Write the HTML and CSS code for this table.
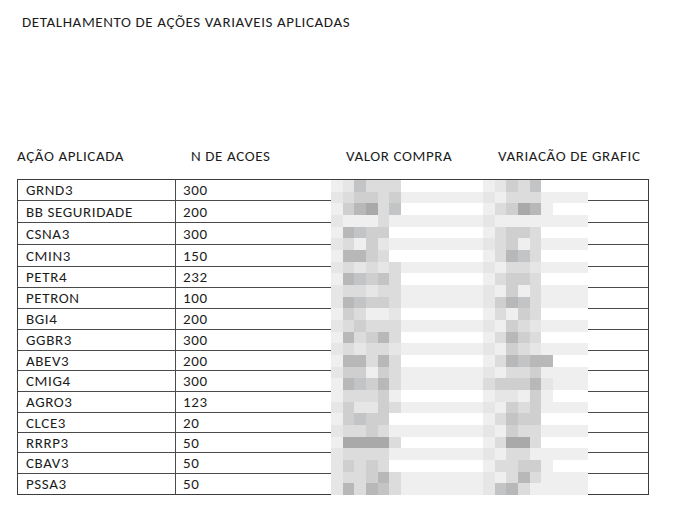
FILE: index.html
```html
<!DOCTYPE html>
<html lang="pt-BR">
<head>
<meta charset="utf-8">
<title>Detalhamento de ações variáveis aplicadas</title>
<link rel="stylesheet" href="styles.css">
</head>
<body>
<div class="page">
  <h1 class="title">DETALHAMENTO DE AÇÕES VARIAVEIS APLICADAS</h1>

  <div class="heads">
    <div class="h h1">AÇÃO APLICADA</div>
    <div class="h h2">N DE ACOES</div>
    <div class="h h3">VALOR COMPRA</div>
    <div class="h h4">VARIACÃO DE GRAFIC</div>
  </div>

  <div class="tbl">
    <div class="row r"><div class="c c1">GRND3</div><div class="c c2">300</div><div class="c c3"></div><div class="c c4"></div></div>
    <div class="row t"><div class="c c1">BB SEGURIDADE</div><div class="c c2">200</div><div class="c c3"></div><div class="c c4"></div></div>
    <div class="row t"><div class="c c1">CSNA3</div><div class="c c2">300</div><div class="c c3"></div><div class="c c4"></div></div>
    <div class="row t"><div class="c c1">CMIN3</div><div class="c c2">150</div><div class="c c3"></div><div class="c c4"></div></div>
    <div class="row r"><div class="c c1">PETR4</div><div class="c c2">232</div><div class="c c3"></div><div class="c c4"></div></div>
    <div class="row r"><div class="c c1">PETRON</div><div class="c c2">100</div><div class="c c3"></div><div class="c c4"></div></div>
    <div class="row r"><div class="c c1">BGI4</div><div class="c c2">200</div><div class="c c3"></div><div class="c c4"></div></div>
    <div class="row r"><div class="c c1">GGBR3</div><div class="c c2">300</div><div class="c c3"></div><div class="c c4"></div></div>
    <div class="row s"><div class="c c1">ABEV3</div><div class="c c2">200</div><div class="c c3"></div><div class="c c4"></div></div>
    <div class="row r"><div class="c c1">CMIG4</div><div class="c c2">300</div><div class="c c3"></div><div class="c c4"></div></div>
    <div class="row r"><div class="c c1">AGRO3</div><div class="c c2">123</div><div class="c c3"></div><div class="c c4"></div></div>
    <div class="row s"><div class="c c1">CLCE3</div><div class="c c2">20</div><div class="c c3"></div><div class="c c4"></div></div>
    <div class="row s"><div class="c c1">RRRP3</div><div class="c c2">50</div><div class="c c3"></div><div class="c c4"></div></div>
    <div class="row r"><div class="c c1">CBAV3</div><div class="c c2">50</div><div class="c c3"></div><div class="c c4"></div></div>
    <div class="row last"><div class="c c1">PSSA3</div><div class="c c2">50</div><div class="c c3"></div><div class="c c4"></div></div>

    <div class="mosaic" id="mosaic" aria-hidden="true"></div>
  </div>
</div>
<script src="mosaic.js"></script>
</body>
</html>
```

FILE: styles.css
```css
* { box-sizing: border-box; }

body {
  margin: 0;
  background: #ffffff;
  color: #1c1c1c;
  font-family: Carlito, Lato, "Open Sans", sans-serif;
}

.page {
  padding: 12px 0 0 17px;
}

.title {
  margin: 0 0 0 5px;
  font-size: 15px;
  letter-spacing: 0.6px;
  font-weight: normal;
  line-height: 20px;
}

.heads {
  display: grid;
  grid-template-columns: 158px 156px 154px 163px;
  margin-top: 114px;
  font-size: 15px;
  letter-spacing: 0.6px;
  line-height: 20px;
}

.h2 { padding-left: 16px; }
.h3 { padding-left: 15px; }
.h4 { padding-left: 13px; }

.tbl {
  position: relative;
  width: 632px;
  margin-top: 13px;
  border: 1px solid #3c3c3c;
  font-size: 15px;
  letter-spacing: 0.6px;
}

.row {
  display: grid;
  grid-template-columns: 158px 156px 154px 1fr;
  border-bottom: 1px solid #4a4a4a;
  height: 21px;
}
.row.t { height: 22px; }
.row.s { height: 20px; }
.row.last { border-bottom: 0; height: 20px; }

.c {
  display: flex;
  align-items: center;
  border-right: 1px solid #4a4a4a;
  white-space: nowrap;
}
.c4 { border-right: 0; }
.c1 { padding-left: 8px; }
.c2 { padding-left: 7px; }

.mosaic {
  position: absolute;
  top: 0;
  left: 313px;
  width: 257px;
  height: 315px;
  display: grid;
  grid-template-columns: repeat(22, 1fr);
  grid-template-rows: repeat(27, 1fr);
}

.s0 { background: #ffffff; }
.s1 { background: #efefef; }
.s2 { background: #e6e6e6; }
.s3 { background: #dcdcdc; }
.s4 { background: #cfcfd0; }
.s5 { background: #c3c4c6; }
.s6 { background: #b8b8b9; }
.s7 { background: #a9a9aa; }
```

FILE: mosaic.js
```js
(function () {
  var rows = [
    "125333" + "0000000" + "124350" + "000",
    "234434" + "1111111" + "213331" + "111",
    "146735" + "0000000" + "134761" + "000",
    "211131" + "1111111" + "211111" + "111",
    "165440" + "0000000" + "134430" + "000",
    "231421" + "1111111" + "234131" + "111",
    "166430" + "0000000" + "136530" + "000",
    "232323" + "1111111" + "213321" + "111",
    "165453" + "0000000" + "134430" + "000",
    "233233" + "1111111" + "214131" + "111",
    "265443" + "1111111" + "246531" + "111",
    "143112" + "0000000" + "131430" + "000",
    "234333" + "1111111" + "214321" + "111",
    "163463" + "0000000" + "136430" + "000",
    "232332" + "1111111" + "214321" + "111",
    "166363" + "0000000" + "136566" + "000",
    "244143" + "1111111" + "213341" + "111",
    "165463" + "1111111" + "344462" + "111",
    "133341" + "0000000" + "122141" + "000",
    "242243" + "1111111" + "214341" + "111",
    "145440" + "0000000" + "135440" + "000",
    "233431" + "1111111" + "214331" + "111",
    "177773" + "0000000" + "137730" + "000",
    "233331" + "1111111" + "213311" + "111",
    "243430" + "0000000" + "133441" + "000",
    "233463" + "1111111" + "213631" + "111",
    "263653" + "1111111" + "256311" + "111"
  ];
  var box = document.getElementById("mosaic");
  var frag = document.createDocumentFragment();
  rows.forEach(function (r) {
    for (var i = 0; i < r.length; i++) {
      var d = document.createElement("div");
      d.className = "px s" + r.charAt(i);
      frag.appendChild(d);
    }
  });
  box.appendChild(frag);
})();
```
